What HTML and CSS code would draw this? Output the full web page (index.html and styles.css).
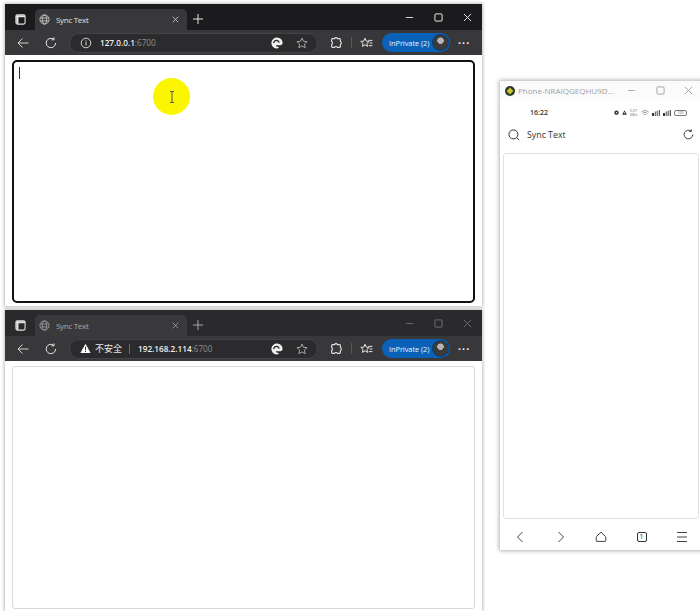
FILE: index.html
```html
<!DOCTYPE html>
<html lang="en">
<head>
<meta charset="utf-8">
<title>Sync Text</title>
<link rel="stylesheet" href="styles.css">
</head>
<body>
<svg class="defs" width="0" height="0" aria-hidden="true">
  <symbol id="i-tabs" viewBox="0 0 12 12"><rect x="1" y="1" width="10" height="10" rx="1.6" fill="none" stroke="currentColor" stroke-width="1.2"/><path d="M1 1.4h10v2.2H1zM1.4 3.6h2.4v7H1.4z" fill="currentColor"/></symbol>
  <symbol id="i-globe" viewBox="0 0 12 12"><g fill="none" stroke="currentColor" stroke-width=".8"><circle cx="6" cy="6" r="5"/><ellipse cx="6" cy="6" rx="2.2" ry="5"/><path d="M1.2 4.4h9.6M1.2 7.6h9.6"/></g></symbol>
  <symbol id="i-x" viewBox="0 0 10 10"><path d="M1 1l8 8M9 1l-8 8" fill="none" stroke="currentColor" stroke-width="1.1"/></symbol>
  <symbol id="i-plus" viewBox="0 0 10 10"><path d="M5 0v10M0 5h10" fill="none" stroke="currentColor" stroke-width="1"/></symbol>
  <symbol id="i-back" viewBox="0 0 12 12"><path d="M11.5 6H1M5.5 1.5L1 6l4.5 4.5" fill="none" stroke="currentColor" stroke-width=".9"/></symbol>
  <symbol id="i-reload" viewBox="0 0 12 12"><path d="M10.6 6A4.7 4.7 0 1 1 8.8 2.3M9 .4v2.4H6.6" fill="none" stroke="currentColor" stroke-width="1"/></symbol>
  <symbol id="i-info" viewBox="0 0 12 12"><circle cx="6" cy="6" r="4.8" fill="none" stroke="currentColor" stroke-width=".9"/><path d="M6 5.2v3.2M6 3.4v1" fill="none" stroke="currentColor" stroke-width="1"/></symbol>
  <symbol id="i-warn" viewBox="0 0 12 12"><path d="M6 .8L11.6 11H.4z" fill="currentColor"/><path d="M6 4.2v3.6M6 8.6v1.2" stroke="#2b2b2d" stroke-width="1.1"/></symbol>
  <symbol id="i-read" viewBox="0 0 12 12"><path d="M6 .4a5.6 5.6 0 0 1 5.6 5.6c0 1.2-.9 2.2-2.4 2.2H4.8c.3 1.2 1.6 1.9 3.2 1.7-.6.9-1.4 1.7-2.6 1.7A5.6 5.6 0 0 1 .4 6C.4 3 3 .4 6 .4z" fill="currentColor"/><path d="M2.6 6c.5-1.800 2-2.800 3.500-2.500 1.100.2 1.900 1 2 2.100" fill="none" stroke="#2b2b2d" stroke-width="1.300"/></symbol>
  <symbol id="i-star" viewBox="0 0 12 12"><path d="M6 1l1.500 3.300 3.600.4-2.700 2.400.8 3.600L6 8.900l-3.200 1.800.8-3.600L.9 4.700l3.600-.4z" fill="none" stroke="currentColor" stroke-width=".9" stroke-linejoin="round"/></symbol>
  <symbol id="i-ext" viewBox="0 0 12 12"><path d="M4.600 1.600a1.500 1.500 0 0 1 2.800 0h2.200a.8.8 0 0 1 .8.8v2.200a1.500 1.500 0 0 1 0 2.800v2.200a.8.8 0 0 1-.8.8H7.400a1.500 1.500 0 0 0-2.800 0H2.400a.8.8 0 0 1-.8-.8V7.400a1.500 1.500 0 0 0 0-2.800V2.400a.8.8 0 0 1 .8-.8z" fill="none" stroke="currentColor" stroke-width="1.100"/></symbol>
  <symbol id="i-fav" viewBox="0 0 13 12"><path d="M5 1.200l1.200 2.900 3 .3-2.300 2 .7 3-2.600-1.600-2.600 1.600.7-3L.8 4.400l3-.3z" fill="none" stroke="currentColor" stroke-width="1" stroke-linejoin="round"/><path d="M8.400 3.400h4M9.600 6h2.800M8.800 8.600h3.600" fill="none" stroke="currentColor" stroke-width="1"/></symbol>
  <symbol id="i-min" viewBox="0 0 10 10"><path d="M1 5h8" fill="none" stroke="currentColor" stroke-width="1"/></symbol>
  <symbol id="i-max" viewBox="0 0 10 10"><rect x="1" y="1" width="8" height="8" rx="1.200" fill="none" stroke="currentColor" stroke-width="1.100"/></symbol>
  <symbol id="i-search" viewBox="0 0 12 12"><circle cx="5.400" cy="5.400" r="4.500" fill="none" stroke="currentColor" stroke-width="1"/><path d="M8.600 8.600l2.600 2.600" fill="none" stroke="currentColor" stroke-width="1"/></symbol>
  <symbol id="i-left" viewBox="0 0 12 12"><path d="M8.500 1L3.500 6l5 5" fill="none" stroke="currentColor" stroke-width="1"/></symbol>
  <symbol id="i-right" viewBox="0 0 12 12"><path d="M3.500 1l5 5-5 5" fill="none" stroke="currentColor" stroke-width="1"/></symbol>
  <symbol id="i-home" viewBox="0 0 12 12"><path d="M6 1.200L1.600 5.400c-.6 1.800-.6 3.200 0 5h8.800c.6-1.800.6-3.200 0-5z" fill="none" stroke="currentColor" stroke-width="1" stroke-linejoin="round"/></symbol>
  <symbol id="i-menu" viewBox="0 0 12 12"><path d="M1 1.500h10M1 6h10M1 10.500h10" fill="none" stroke="currentColor" stroke-width="1"/></symbol>
  <symbol id="i-alarm" viewBox="0 0 6 6"><circle cx="3" cy="3.200" r="2.600" fill="currentColor"/><circle cx="3" cy="3.200" r=".8" fill="#fff"/></symbol>
  <symbol id="i-person" viewBox="0 0 6 6"><path d="M3 .2L5.800 5.600H.2z" fill="currentColor"/><circle cx="3" cy="3.400" r=".7" fill="#fff"/></symbol>
  <symbol id="i-wifi" viewBox="0 0 8 6"><path d="M.3 2.200a5 5 0 0 1 7.400 0M1.600 3.500a3.200 3.200 0 0 1 4.800 0M2.900 4.800a1.500 1.500 0 0 1 2.200 0" fill="none" stroke="currentColor" stroke-width=".7"/></symbol>
  <symbol id="i-sig" viewBox="0 0 8 6"><path d="M0 3h2v3H0zM2.800 1.500h.9V6h-.9zM4.700 .8h.9V6h-.9zM6.800 0h1v6h-1z" fill="currentColor"/></symbol>
  <symbol id="i-logo" viewBox="0 0 10 10"><circle cx="5" cy="5" r="5" fill="#26382a"/><path d="M5 1.600L8.400 5 5 8.400 1.600 5z" fill="#c9c42a"/></symbol>
</svg>

<section class="win win-a">
  <div class="titlebar">
    <span class="tabside"><svg class="ic12"><use href="#i-tabs"/></svg></span>
    <div class="tab">
      <svg class="ic12 glob"><use href="#i-globe"/></svg>
      <span class="tabtitle">Sync Text</span>
      <svg class="ic7"><use href="#i-x"/></svg>
    </div>
    <svg class="ic10 newtab"><use href="#i-plus"/></svg>
    <div class="winbtns">
      <svg class="ic9"><use href="#i-min"/></svg>
      <svg class="ic9"><use href="#i-max"/></svg>
      <svg class="ic9"><use href="#i-x"/></svg>
    </div>
  </div>
  <div class="toolbar">
    <svg class="ic12 back"><use href="#i-back"/></svg>
    <svg class="ic12 reload"><use href="#i-reload"/></svg>
    <div class="omni">
      <svg class="ic12 info"><use href="#i-info"/></svg>
      <span class="url"><b>127.0.0.1</b><i>:6700</i></span>
      <svg class="ic12 read"><use href="#i-read"/></svg>
      <svg class="ic12 star"><use href="#i-star"/></svg>
    </div>
    <svg class="ic12 ext"><use href="#i-ext"/></svg>
    <span class="sep"></span>
    <svg class="ic12 fav"><use href="#i-fav"/></svg>
    <div class="private"><span>InPrivate (2)</span><span class="avatar"></span></div>
    <span class="dots">···</span>
  </div>
  <div class="page">
    <div class="field field-on"><span class="caret"></span></div>
  </div>
</section>

<section class="win win-b">
  <div class="titlebar">
    <span class="tabside"><svg class="ic12"><use href="#i-tabs"/></svg></span>
    <div class="tab">
      <svg class="ic12 glob"><use href="#i-globe"/></svg>
      <span class="tabtitle">Sync Text</span>
      <svg class="ic7"><use href="#i-x"/></svg>
    </div>
    <svg class="ic10 newtab"><use href="#i-plus"/></svg>
    <div class="winbtns">
      <svg class="ic9"><use href="#i-min"/></svg>
      <svg class="ic9"><use href="#i-max"/></svg>
      <svg class="ic9"><use href="#i-x"/></svg>
    </div>
  </div>
  <div class="toolbar">
    <svg class="ic12 back"><use href="#i-back"/></svg>
    <svg class="ic12 reload"><use href="#i-reload"/></svg>
    <div class="omni">
      <svg class="ic12 info warn"><use href="#i-warn"/></svg>
      <span class="insecure">不安全</span>
      <span class="url url-b"><b>192.168.2.114</b><i>:6700</i></span>
      <svg class="ic12 read"><use href="#i-read"/></svg>
      <svg class="ic12 star"><use href="#i-star"/></svg>
    </div>
    <svg class="ic12 ext"><use href="#i-ext"/></svg>
    <span class="sep"></span>
    <svg class="ic12 fav"><use href="#i-fav"/></svg>
    <div class="private"><span>InPrivate (2)</span><span class="avatar"></span></div>
    <span class="dots">···</span>
  </div>
  <div class="page">
    <div class="field"></div>
  </div>
</section>

<section class="phone">
  <div class="ph-title">
    <svg class="ph-logo"><use href="#i-logo"/></svg>
    <span class="ph-name">Phone-NRAIQGEQHU9D...</span>
    <div class="ph-btns">
      <svg class="ic9"><use href="#i-min"/></svg>
      <svg class="ic9"><use href="#i-max"/></svg>
      <svg class="ic9"><use href="#i-x"/></svg>
    </div>
  </div>
  <div class="ph-status">
    <span class="ph-time">16:22</span>
    <span class="ph-icons">
      <svg class="st6"><use href="#i-alarm"/></svg>
      <svg class="st6"><use href="#i-person"/></svg>
      <span class="tiny">0.07<br>KB/s</span>
      <svg class="st8 soft"><use href="#i-wifi"/></svg>
      <svg class="st8"><use href="#i-sig"/></svg>
      <svg class="st8"><use href="#i-sig"/></svg>
      <span class="batt">100</span>
    </span>
  </div>
  <div class="ph-head">
    <svg class="ic12 ph-search"><use href="#i-search"/></svg>
    <span class="ph-h">Sync Text</span>
    <svg class="ic12 ph-reload"><use href="#i-reload"/></svg>
  </div>
  <div class="ph-field"></div>
  <div class="ph-nav">
    <svg class="ic12"><use href="#i-left"/></svg>
    <svg class="ic12"><use href="#i-right"/></svg>
    <svg class="ic12"><use href="#i-home"/></svg>
    <span class="count">1</span>
    <svg class="ic12"><use href="#i-menu"/></svg>
  </div>
</section>

<div class="spot"><svg class="ibeam" viewBox="0 0 6 12"><path d="M1 .5h4M3 .5v11M1 11.500h4" fill="none" stroke="#555" stroke-width="1"/></svg></div>
</body>
</html>
```
FILE: styles.css
```css
* { box-sizing: border-box; }
html, body { margin: 0; height: 100%; }
body { position: relative; width: 700px; height: 611px; overflow: hidden; background: #fff; font-family: "Open Sans", "Noto Sans", "Liberation Sans", sans-serif; }
.defs { position: absolute; }
svg { display: block; flex: none; }
.ic7 { width: 7px; height: 7px; }
.ic9 { width: 9px; height: 9px; }
.ic10 { width: 10px; height: 10px; }
.ic12 { width: 12px; height: 12px; }

.win { position: absolute; left: 5px; width: 477px; display: flex; flex-direction: column; box-shadow: 0 0 3px 1px rgba(0,0,0,.25); background: #fff; }
.win-a { top: 4px; height: 302px; }
.win-b { top: 310px; height: 301px; }

.titlebar { height: 26px; display: flex; align-items: flex-end; background: #1b1b1d; color: #e8e8e8; flex: none; }
.win-b .titlebar { background: #2a2a2c; color: #a8a8aa; }
.tabside { width: 30px; height: 21px; display: flex; align-items: center; justify-content: center; color: #e4e4e4; }
.tabside .ic12 { width: 11px; height: 11px; }
.tab { width: 152px; height: 21px; background: #38383a; border-radius: 5px 5px 0 0; display: flex; align-items: center; padding: 0 8px 0 4px; color: #e0e0e0; }
.win-b .tab { color: #a9a9ab; background: #3a3a3c; }
.glob { margin-right: 6px; width: 11px; height: 11px; }
.tabtitle { flex: 1; font-size: 8px; letter-spacing: -.3px; }
.newtab { margin: 0 0 6px 6px; }
.winbtns { margin-left: auto; height: 26px; padding-right: 10px; display: flex; align-items: center; gap: 20px; }
.win-b .winbtns { color: #6e6e70; }

.toolbar { height: 25px; flex: none; background: #38383a; display: flex; align-items: center; color: #e2e2e2; }
.back { margin-left: 12px; }
.reload { margin-left: 16px; }
.omni { margin-left: 12px; width: 249px; height: 20px; border-radius: 10px; background: #2b2b2d; border: 1px solid #434345; display: flex; align-items: center; }
.info { margin-left: 10px; }
.warn { width: 11px; height: 11px; color: #fff; }
.url { font-size: 8.2px; margin-left: 8px; color: #f0f0f0; flex: 1; }
.url b { font-weight: 600; }
.url i { font-style: normal; color: #8f8f90; }
.url-b { margin-left: 0; padding-left: 8px; }
.insecure { font: 9px "Noto Sans CJK SC", sans-serif; color: #e8e8e8; margin-left: 4px; padding-right: 7px; border-right: 1px solid #6a6a6c; line-height: 10px; }
.read { margin-right: 13px; color: #f0f0f0; }
.star { margin-right: 9px; color: #b0b0b0; }
.ext { margin-left: 12px; }
.sep { width: 1px; height: 11px; background: #58585a; margin-left: 9px; }
.fav { margin-left: 8px; width: 13px; }
.private { margin-left: 9px; width: 68px; height: 19px; border-radius: 10px; background: #0a62b8; color: #e8f2ff; font-size: 7.4px; letter-spacing: -.05px; display: flex; align-items: center; justify-content: space-between; padding: 0 1px 0 7px; }
.avatar { width: 17px; height: 17px; border-radius: 50%; border: 1px solid #0c3a6e; background: radial-gradient(circle at 50% 38%, #b5b5b5 0 3px, #3b3b3b 3.5px 100%); }
.dots { margin-left: 8px; font: bold 11px "Liberation Sans", sans-serif; letter-spacing: .4px; color: #eee; }

.page { flex: 1; padding: 5px 7px 3px; background: #fff; display: flex; }
.win-b .page { padding-bottom: 2px; }
.field { flex: 1; border: 1px solid #d9d9d9; border-radius: 3px; }
.field-on { border: 2px solid #111; border-radius: 5px; padding: 5px; }
.caret { display: block; width: 1px; height: 12px; background: #333; }

.phone { position: absolute; left: 500px; top: 81px; width: 205px; height: 469px; background: #fff; box-shadow: 0 0 4px 1px rgba(0,0,0,.3); display: flex; flex-direction: column; }
.ph-title { height: 19px; flex: none; display: flex; align-items: center; padding: 0 12px 0 5px; background: #fbfbfb; }
.ph-logo { width: 10px; height: 10px; }
.ph-name { font-size: 8px; color: #a0a0a0; margin-left: 3px; flex: 1; white-space: nowrap; }
.ph-btns { display: flex; gap: 19.5px; color: #a9a9a9; }
.ph-status { height: 25px; flex: none; display: flex; align-items: center; justify-content: space-between; padding: 0 18px 0 30px; }
.ph-time { font-size: 7px; font-weight: 600; color: #333; }
.ph-icons { display: flex; align-items: center; color: #333; gap: 3px; }
.st6 { width: 5px; height: 5px; }
.st8 { width: 8px; height: 6px; }
.soft { color: #777; }
.tiny { font-size: 3.5px; line-height: 3.5px; color: #666; width: 8px; white-space: nowrap; }
.batt { width: 13px; height: 6px; border: 1px solid #777; border-radius: 2px; font-size: 3.5px; line-height: 4px; text-align: center; color: #555; }
.ph-head { height: 19px; flex: none; display: flex; align-items: center; padding: 0 11px 0 8px; color: #333; }
.ph-h { font-size: 8.8px; margin-left: 7px; flex: 1; color: #333; }
.ph-reload { width: 11px; height: 11px; }
.ph-field { height: 366px; margin: 9px 0 0 3px; width: 196px; border: 1px solid #e0e0e0; border-radius: 3px; flex: none; }
.ph-nav { flex: 1; display: flex; align-items: center; justify-content: space-between; padding: 5px 17px 0 14px; color: #444; }
.count { width: 10px; height: 10px; margin: 0 1px; border: 1px solid #333; border-radius: 2px; font-size: 7px; line-height: 8px; text-align: center; color: #333; }

.spot { position: absolute; left: 153px; top: 78px; width: 37px; height: 37px; border-radius: 50%; background: #fbf500; display: flex; align-items: center; justify-content: center; }
.ibeam { width: 6px; height: 12px; }
```
